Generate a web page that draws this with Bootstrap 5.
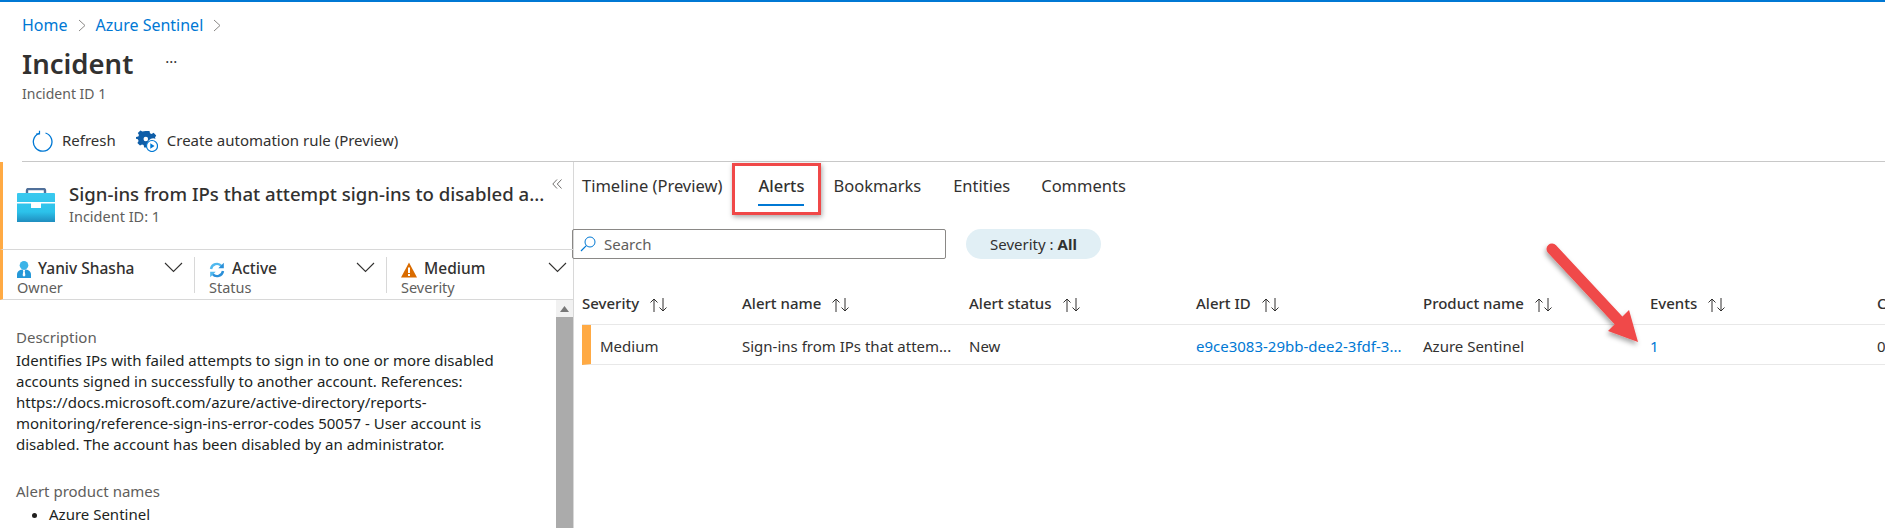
<!DOCTYPE html>
<html lang="en">
<head>
  <meta charset="UTF-8">
  <title>Incident | Azure Sentinel</title>
  <link href="https://cdn.jsdelivr.net/npm/bootstrap@5.3.0/dist/css/bootstrap.min.css" rel="stylesheet">
  <style>
    body { height: 528px; overflow: hidden; font-family: "Noto Sans", "Open Sans", sans-serif; font-size: 15px; color: #323130; border-top: 2px solid #0078d4; }
    a { color: #0078d4; text-decoration: none; }
    .crumbs { padding: 13px 0 0 22px; font-size: 16px; line-height: 21px; gap: 10px; height: 40px; }
    .crumbs svg { margin-top: 4px; }
    .title-row { padding-left: 22px; height: 44px; }
    .title-row h1 { font-size: 27.5px; font-weight: 600; line-height: 44px; margin: 0; }
    .title-row span { margin-left: 32px; font-size: 15px; padding-bottom: 6px; }
    .sub-id { padding-left: 22px; color: #605e5c; font-size: 14px; line-height: 16px; height: 28px; }
    .cmd-bar { margin-left: 22px; height: 48px; border-bottom: 1px solid #c8c8c8; padding: 6px 0 0 10px; gap: 9px; }
    .cmd-bar .cmd-text { margin-right: 11px; }
    .split { height: 366px; }
    .side { width: 574px; flex: none; border-right: 1px solid #d8d8d8; }
    .side-head { border-left: 3px solid #ffaa44; border-bottom: 1px solid #d8d8d8; height: 88px; padding: 20px 0 0 14px; column-gap: 14px; }
    .side-head > svg { margin-top: 6px; }
    .side-head h2 { font-size: 18.6px; font-weight: 500; margin: 0; line-height: 24px; white-space: nowrap; }
    .side-head p { margin: 0; color: #605e5c; font-size: 14.5px; line-height: 20px; }
    .collapse-btn { position: absolute; top: 11px; right: 11px; }
    .props { border-left: 3px solid #ffaa44; border-bottom: 1px solid #d8d8d8; height: 50px; padding-left: 14px; padding-top: 7px; }
    .prop { width: 192px; height: 36px; position: relative; flex: none; }
    .prop:first-child { width: 177px; }
    .prop:last-child { width: 187px; }
    .prop + .prop { border-left: 1px solid #d8d8d8; padding-left: 14px; }
    .prop b { font-weight: 500; font-size: 15.5px; line-height: 23px; margin-left: 7px; }
    .prop small { display: block; color: #605e5c; font-size: 14.5px; line-height: 15px; }
    .prop .chev { position: absolute; top: 5px; right: 11px; }
    .prop:last-child .chev { right: 6px; }
    .side-body { height: 228px; overflow: hidden; }
    .side-text { width: 530px; padding: 27px 0 0 16px; line-height: 21px; font-size: 15px; }
    .side-text h6 { color: #605e5c; font-size: 15px; font-weight: 400; line-height: 21px; margin: 0 0 2px; }
    .side-text p { color: #201f1e; margin: 0 0 26px; width: 505px; }
    .side-text ul { padding-left: 33px; margin: 0; color: #201f1e; }
    .scroll-track { width: 17px; background: #f1f1f1; }
    .scroll-arrow { height: 17px; }
    .scroll-thumb { background: #ababab; }
    .main { min-width: 0; flex: 1; }
    .tab-row { height: 52px; padding: 12px 0 0 8px; font-size: 16.5px; gap: 32px; }
    .tab-item { line-height: 24px; height: 32px; position: relative; }
    .tab-active { margin-left: 4px; margin-right: -3px; font-weight: 500; }
    .tab-item:last-child { margin-left: -1px; }
    .tab-active::after { content: ""; position: absolute; left: 0; right: 0; bottom: 0; height: 2px; background: #0078d4; }
    .red-box { position: absolute; left: -26px; right: -17px; top: -11px; bottom: -9px; border: 3px solid #f04848; box-shadow: 1px 2px 5px rgba(0, 0, 0, .35); }
    .filter-row { gap: 20px; height: 30px; margin-top: 15px; }
    .search-box { width: 374px; height: 30px; border: 1px solid #8a8886; border-radius: 2px; padding-left: 7px; gap: 8px; color: #605e5c; margin-left: -2px; }
    .sev-pill { width: 135px; height: 30px; border-radius: 15px; background: #e1eff5; }
    .sev-pill b { font-weight: 700; margin-left: 4px; }
    .alert-table { table-layout: fixed; border-collapse: separate; border-spacing: 0; width: 1303px; margin: 32px 0 0 8px; font-size: 15px; }
    .alert-table th, .alert-table td { padding: 0; white-space: nowrap; border-bottom: 1px solid #e8e8e8; color: #323130; vertical-align: middle; box-shadow: none; }
    .alert-table th { height: 34px; font-weight: 500; padding-bottom: 9px; }
    .alert-table th svg { margin-left: 10px; vertical-align: -3px; }
    .alert-table td { height: 40px; padding-top: 3px; }
    .alert-table td a { color: #0078d4; }
    .alert-table .sev-cell { border-left: 9px solid #ffaa44; }
    .sev-cell span { padding-left: 9px; }
    .call-arrow { position: absolute; left: 0; top: 0; pointer-events: none; }
  </style>
</head>
<body>
  <nav class="crumbs d-flex">
    <a href="#">Home</a>
    <svg width="8" height="13" viewBox="0 0 8 13"><path d="M1 1l6 5.5L1 12" fill="none" stroke="#8a8886"/></svg>
    <a href="#">Azure Sentinel</a>
    <svg width="8" height="13" viewBox="0 0 8 13"><path d="M1 1l6 5.5L1 12" fill="none" stroke="#8a8886"/></svg>
  </nav>
  <div class="title-row d-flex align-items-center">
    <h1>Incident</h1>
    <span>···</span>
  </div>
  <div class="sub-id">Incident ID 1</div>
  <div class="cmd-bar d-flex align-items-center">
    <svg width="21" height="22" viewBox="0 0 21 22" fill="none" stroke="#0078d4" stroke-width="1.3"><path d="M7 3.300A9.300 9.300 0 1 0 13.500 3"/><path d="M7.500 0.800v3.200H4" stroke-width="1.200"/></svg>
    <span class="cmd-text">Refresh</span>
    <svg width="22" height="22" viewBox="0 0 22 22"><path fill="#0f5ea8" d="M7.500 1h4l.5 2.300 1.600.7 2-1.200 2.600 2.700-1.200 2 .5 1.200a6 6 0 0 0-7.500 8.300l-.9.4H6.200l-.6-2.300-1.600-.7-2 1.200L-.6 12.900l1.200-2-.7-1.600L-2 8.800V7l2.300-.5.700-1.600-1.200-2L2.400.4l2 1.200z" transform="translate(2 0)"/><circle cx="9.800" cy="9" r="2.300" fill="#fff"/><circle cx="16" cy="16" r="5.500" fill="#fff" stroke="#0078d4" stroke-width="1.200"/><path d="M14.300 13.300v5.400l4.200-2.700z" fill="#0078d4"/></svg>
    <span>Create automation rule (Preview)</span>
  </div>
  <div class="split d-flex">
    <aside class="side">
      <div class="side-head position-relative d-flex">
        <svg width="38" height="34" viewBox="0 0 38 34" class="flex-shrink-0">
          <defs><linearGradient id="caseFill" x1="0" y1="0" x2="0" y2="1"><stop offset="0" stop-color="#3ac9ef"/><stop offset=".65" stop-color="#2cc2ea"/><stop offset="1" stop-color="#1f8dbf"/></linearGradient></defs>
          <path d="M10 6V2.500A1.500 1.500 0 0 1 11.500 1h15A1.500 1.500 0 0 1 28 2.500V6" fill="none" stroke="#50709a" stroke-width="2.400"/>
          <path d="M1 5h36a1 1 0 0 1 1 1v28H0V6a1 1 0 0 1 1-1z" fill="url(#caseFill)"/>
          <path d="M0 14h38v1.500H0z" fill="#fff"/>
          <path d="M14 15h10v5H14z" fill="#fff"/>
        </svg>
        <div>
          <h2>Sign-ins from IPs that attempt sign-ins to disabled a...</h2>
          <p>Incident ID: 1</p>
        </div>
        <svg class="collapse-btn" width="10" height="10" viewBox="0 0 10 10" fill="none" stroke="#605e5c" stroke-width=".9"><path d="M5 .5L.8 5 5 9.500M9.500.5L5.300 5l4.200 4.500"/></svg>
      </div>
      <div class="props d-flex">
        <div class="prop">
          <svg width="14" height="17" viewBox="0 0 14 17"><circle cx="7" cy="4.300" r="4.300" fill="#3cb4e8"/><path d="M0 17v-3.500C0 10.500 2.500 9 5 8.500h4c2.500.5 5 2 5 5V17z" fill="#2498d8"/><path d="M5.800 9h2.400l-.5 1.300.7 4-1.400 1.500-1.400-1.500.7-4z" fill="#fff"/></svg><b>Yaniv Shasha</b>
          <small>Owner</small>
          <svg class="chev" width="19" height="11" viewBox="0 0 19 11"><path d="M1 1l8.500 8.500L18 1" fill="none" stroke="#323130" stroke-width="1.100"/></svg>
        </div>
        <div class="prop">
          <svg width="16" height="16" viewBox="0 0 16 16" fill="none" stroke-width="2.400"><path d="M2 7a6 6 0 0 1 10.500-3" stroke="#50b8ee"/><path d="M14 9a6 6 0 0 1-10.500 3" stroke="#2a8fd8"/><path d="M14.800 .8v5.500H9.300z" fill="#2a8fd8" stroke="none"/><path d="M1.200 15.200V9.700h5.500z" fill="#50b8ee" stroke="none"/></svg><b>Active</b>
          <small>Status</small>
          <svg class="chev" width="19" height="11" viewBox="0 0 19 11"><path d="M1 1l8.500 8.500L18 1" fill="none" stroke="#323130" stroke-width="1.100"/></svg>
        </div>
        <div class="prop">
          <svg width="16" height="16" viewBox="0 0 16 16"><path d="M8 .5l8 15H0z" fill="#d96b00"/><path d="M7 5.500h2V11H7zM7 12h2v2H7z" fill="#fff"/></svg><b>Medium</b>
          <small>Severity</small>
          <svg class="chev" width="19" height="11" viewBox="0 0 19 11"><path d="M1 1l8.500 8.500L18 1" fill="none" stroke="#323130" stroke-width="1.100"/></svg>
        </div>
      </div>
      <div class="side-body d-flex justify-content-between">
        <div class="side-text">
          <h6>Description</h6>
          <p>Identifies IPs with failed attempts to sign in to one or more disabled accounts signed in successfully to another account. References: https://docs.microsoft.com/azure/active-directory/reports-monitoring/reference-sign-ins-error-codes 50057 - User account is disabled. The account has been disabled by an administrator.</p>
          <h6>Alert product names</h6>
          <ul><li>Azure Sentinel</li></ul>
        </div>
        <div class="scroll-track d-flex flex-column">
          <div class="scroll-arrow d-flex align-items-center justify-content-center">
            <svg width="9" height="6" viewBox="0 0 9 6"><path d="M4.500 0L9 6H0z" fill="#777"/></svg>
          </div>
          <div class="scroll-thumb flex-grow-1"></div>
        </div>
      </div>
    </aside>
    <main class="main">
      <div class="tab-row d-flex">
        <div class="tab-item">Timeline (Preview)</div>
        <div class="tab-item tab-active">Alerts<div class="red-box"></div></div>
        <div class="tab-item">Bookmarks</div>
        <div class="tab-item">Entities</div>
        <div class="tab-item">Comments</div>
      </div>
      <div class="filter-row d-flex">
        <div class="search-box d-flex align-items-center">
          <svg width="16" height="16" viewBox="0 0 16 16" fill="none" stroke="#0078d4"><circle cx="10" cy="6" r="5"/><path d="M6.300 9.700L1 15" stroke-width="1.200"/></svg>
          <span>Search</span>
        </div>
        <div class="sev-pill d-flex align-items-center justify-content-center">Severity : <b>All</b></div>
      </div>
      <table class="table alert-table">
        <colgroup><col width="160"><col width="227"><col width="227"><col width="227"><col width="227"><col width="227"><col width="8"></colgroup>
        <thead>
          <tr>
            <th>Severity<svg width="20" height="14" viewBox="0 0 20 14" fill="none" stroke="#323130"><path d="M5 14V1M1.500 4.500L5 1l3.500 3.500M14 0v13M10.500 9.500L14 13l3.500-3.500"/></svg></th>
            <th>Alert name<svg width="20" height="14" viewBox="0 0 20 14" fill="none" stroke="#323130"><path d="M5 14V1M1.500 4.500L5 1l3.500 3.500M14 0v13M10.500 9.500L14 13l3.500-3.500"/></svg></th>
            <th>Alert status<svg width="20" height="14" viewBox="0 0 20 14" fill="none" stroke="#323130"><path d="M5 14V1M1.500 4.500L5 1l3.500 3.500M14 0v13M10.500 9.500L14 13l3.500-3.500"/></svg></th>
            <th>Alert ID<svg width="20" height="14" viewBox="0 0 20 14" fill="none" stroke="#323130"><path d="M5 14V1M1.500 4.500L5 1l3.500 3.500M14 0v13M10.500 9.500L14 13l3.500-3.500"/></svg></th>
            <th>Product name<svg width="20" height="14" viewBox="0 0 20 14" fill="none" stroke="#323130"><path d="M5 14V1M1.500 4.500L5 1l3.500 3.500M14 0v13M10.500 9.500L14 13l3.500-3.500"/></svg></th>
            <th>Events<svg width="20" height="14" viewBox="0 0 20 14" fill="none" stroke="#323130"><path d="M5 14V1M1.500 4.500L5 1l3.500 3.500M14 0v13M10.500 9.500L14 13l3.500-3.500"/></svg></th>
            <th>C</th>
          </tr>
        </thead>
        <tbody>
          <tr>
            <td class="sev-cell"><span>Medium</span></td>
            <td>Sign-ins from IPs that attem...</td>
            <td>New</td>
            <td><a href="#">e9ce3083-29bb-dee2-3fdf-3...</a></td>
            <td>Azure Sentinel</td>
            <td><a href="#">1</a></td>
            <td>0</td>
          </tr>
        </tbody>
      </table>
    </main>
  </div>
  <svg class="call-arrow" width="1885" height="528" viewBox="0 0 1885 528">
    <defs><filter id="arrowShadow" x="-30%" y="-30%" width="160%" height="160%"><feDropShadow dx="-1" dy="3" stdDeviation="2.500" flood-color="#000" flood-opacity=".35"/></filter></defs>
    <g filter="url(#arrowShadow)">
      <path d="M1552 249L1620 322" stroke="#f04848" stroke-width="11" stroke-linecap="round"/>
      <path d="M1629 310L1638 342L1608 331z" fill="#f04848"/>
    </g>
  </svg>
</body>
</html>
